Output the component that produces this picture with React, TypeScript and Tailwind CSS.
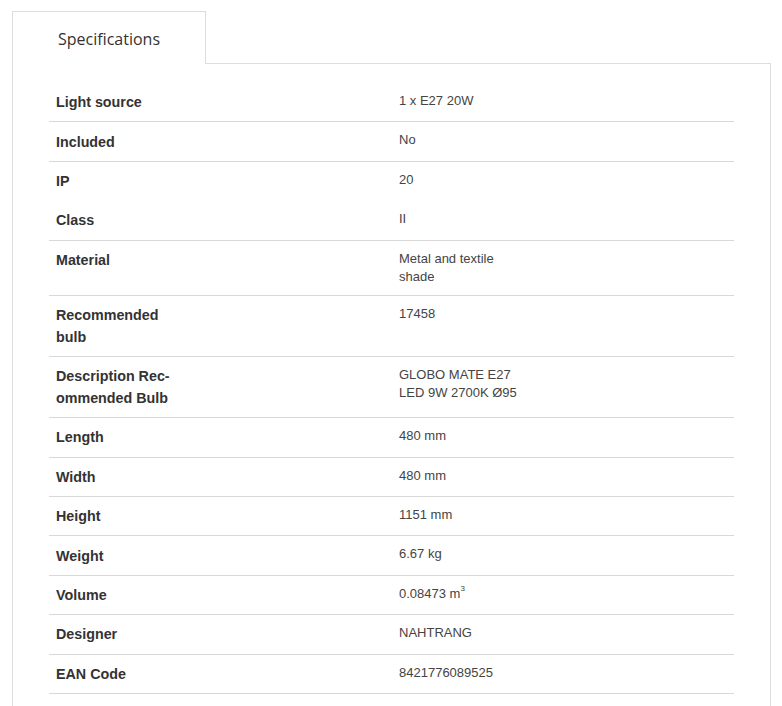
import type { ReactNode } from 'react'

type Spec = { label: ReactNode; value: ReactNode; noBorder?: boolean }

const specs: Spec[] = [
  { label: 'Light source', value: '1 x E27 20W' },
  { label: 'Included', value: 'No' },
  { label: 'IP', value: '20', noBorder: true },
  { label: 'Class', value: 'II' },
  { label: 'Material', value: <>Metal and textile<br />shade</> },
  { label: <>Recommended<br />bulb</>, value: '17458' },
  { label: <>Description Rec-<br />ommended Bulb</>, value: <>GLOBO MATE E27<br />LED 9W 2700K Ø95</> },
  { label: 'Length', value: '480 mm' },
  { label: 'Width', value: '480 mm' },
  { label: 'Height', value: '1151 mm' },
  { label: 'Weight', value: '6.67 kg' },
  {
    label: 'Volume',
    value: (
      <>
        0.08473 m<sup className="relative -top-[1px] text-[8px] align-super leading-none">3</sup>
      </>
    ),
  },
  { label: 'Designer', value: 'NAHTRANG' },
  { label: 'EAN Code', value: '8421776089525' },
]

export default function App() {
  return (
    <div className="min-h-screen bg-white pl-[12px] pt-[11px]">
      <div className="w-[759px]">
        {/* Tabs */}
        <div className="flex">
          <div className="flex h-[53px] w-[194px] items-center border-l border-r border-t border-[#dddddd] bg-white pl-[45px] pt-[1px]">
            <span className="font-['Open_Sans',sans-serif] text-[16px] text-[#333333]">Specifications</span>
          </div>
          <div className="flex-1 border-b border-[#dddddd]" />
        </div>

        {/* Panel */}
        <div className="border-b border-l border-r border-[#dddddd] px-[36px] pb-[40px] pt-[19px]">
          <div className="font-['Liberation_Sans',Arial,sans-serif]">
            {specs.map((s, i) => (
              <div
                key={i}
                className={`flex items-start ${s.noBorder ? 'border-b border-transparent' : 'border-b border-[#d8d8d8]'}`}
              >
                <div className="w-[343px] shrink-0 py-[8.2px] pl-[7px] text-[14.3px] font-bold leading-[22px] text-[#333333]">
                  {s.label}
                </div>
                <div className="flex-1 py-[9px] pl-[7px] text-[13px] leading-[18px] text-[#444444]">
                  {s.value}
                </div>
              </div>
            ))}
          </div>
        </div>
      </div>
    </div>
  )
}
